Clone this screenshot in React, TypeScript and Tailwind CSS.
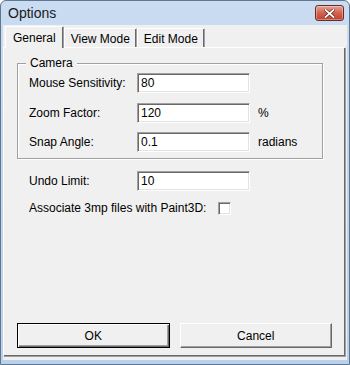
import { ReactNode } from "react";

const sunken =
  "h-[20px] w-[113px] border border-t-[#a0a0a0] border-l-[#a0a0a0] border-r-white border-b-white bg-white px-[3px] text-[12px] leading-[18px] text-black shadow-[inset_1px_1px_0_#696969,inset_-1px_-1px_0_#e3e3e3]";

function Field({ value }: { value: string }) {
  return <div className={sunken}>{value}</div>;
}

function Row({ label, value, unit }: { label: string; value: string; unit?: string }) {
  return (
    <div className="flex h-[20px] items-center">
      <span className="w-[108px] text-[12px]">{label}</span>
      <Field value={value} />
      {unit && <span className="ml-[8px] text-[12px]">{unit}</span>}
    </div>
  );
}

function Tab({ children, active }: { children: ReactNode; active?: boolean }) {
  return active ? (
    <div className="relative z-10 -mb-px flex h-[22px] items-start border border-b-0 border-t-white border-l-white border-r-[#a0a0a0] bg-[#f0f0f0] px-[7px] pt-[2px] text-[12px] shadow-[inset_-1px_0_0_#696969]">
      {children}
    </div>
  ) : (
    <div className="flex h-[19px] items-center border border-b-0 border-t-white border-l-white border-r-[#a0a0a0] px-[6px] pt-[2px] text-[12px] shadow-[inset_-1px_0_0_#696969]">
      {children}
    </div>
  );
}

export default function App() {
  return (
    <div className="flex h-[365px] w-[350px] flex-col overflow-hidden rounded-t-[6px] border border-[#5f7590] bg-gradient-to-b from-[#c9dcf2] to-[#b9d1ea] font-['Liberation_Sans',Arial,sans-serif] text-black">
      {/* title bar */}
      <div className="flex h-[24px] shrink-0 items-center justify-between pl-[7px] pr-[5px]">
        <span className="text-[14px] leading-none text-[#1a1a1a]">Options</span>
        <button
          type="button"
          className="flex h-[16px] w-[29px] items-center justify-center rounded-[3px] border border-[#6a2a25] bg-gradient-to-b from-[#e6a294] via-[#d2614f] to-[#c0412d] shadow-[inset_0_0_0_1px_rgba(255,255,255,0.35)]"
          aria-label="Close"
        >
          <svg width="11" height="9" viewBox="0 0 11 9">
            <path d="M1.5 1 L9.5 8 M9.5 1 L1.5 8" stroke="#5a1a12" strokeWidth="3" strokeLinecap="square" />
            <path d="M1.5 1 L9.5 8 M9.5 1 L1.5 8" stroke="white" strokeWidth="1.8" strokeLinecap="square" />
          </svg>
        </button>
      </div>

      {/* client area */}
      <div className="mx-[2px] mb-[4px] flex flex-1 flex-col bg-[#f0f0f0] pt-[1px] pb-[3px] pr-[1px]">
        <div className="flex items-end pl-[2px]">
          <Tab active>General</Tab>
          <Tab>View Mode</Tab>
          <Tab>Edit Mode</Tab>
        </div>

        <div className="flex flex-1 flex-col border border-t-white border-l-white border-r-[#a0a0a0] border-b-[#a0a0a0] px-[13px] pb-[8px] pt-[15px] shadow-[inset_-1px_-1px_0_#696969]">
          {/* camera group */}
          <div className="relative w-[306px] border border-[#a0a0a0] px-[11px] pt-[9px] pb-[6px] shadow-[1px_1px_0_white,inset_1px_1px_0_white]">
            <span className="absolute -top-[8px] left-[8px] bg-[#f0f0f0] px-[4px] text-[12px] leading-[14px]">
              Camera
            </span>
            <div className="flex flex-col gap-[9.5px]">
              <Row label="Mouse Sensitivity:" value="80" />
              <Row label="Zoom Factor:" value="120" unit="%" />
              <Row label="Snap Angle:" value="0.1" unit="radians" />
            </div>
          </div>

          <div className="mt-[12px] flex flex-col gap-[10px] pl-[12px]">
            <Row label="Undo Limit:" value="10" />
            <div className="flex h-[14px] items-center">
              <span className="text-[12px]">Associate 3mp files with Paint3D:</span>
              <span className="ml-[12px] h-[13px] w-[13px] border border-t-[#a0a0a0] border-l-[#a0a0a0] border-r-white border-b-white bg-white shadow-[inset_1px_1px_0_#696969,inset_-1px_-1px_0_#e3e3e3]" />
            </div>
          </div>

          <div className="mt-auto flex gap-[10px]">
            <button
              type="button"
              className="h-[25px] w-[153px] border border-black bg-[#f0f0f0] text-[12px] shadow-[inset_1px_1px_0_white,inset_-1px_-1px_0_#696969,inset_-2px_-2px_0_#a0a0a0]"
            >
              OK
            </button>
            <button
              type="button"
              className="h-[25px] w-[153px] border border-t-white border-l-white border-r-[#696969] border-b-[#696969] bg-[#f0f0f0] text-[12px] shadow-[inset_-1px_-1px_0_#a0a0a0]"
            >
              Cancel
            </button>
          </div>
        </div>
      </div>
    </div>
  );
}
